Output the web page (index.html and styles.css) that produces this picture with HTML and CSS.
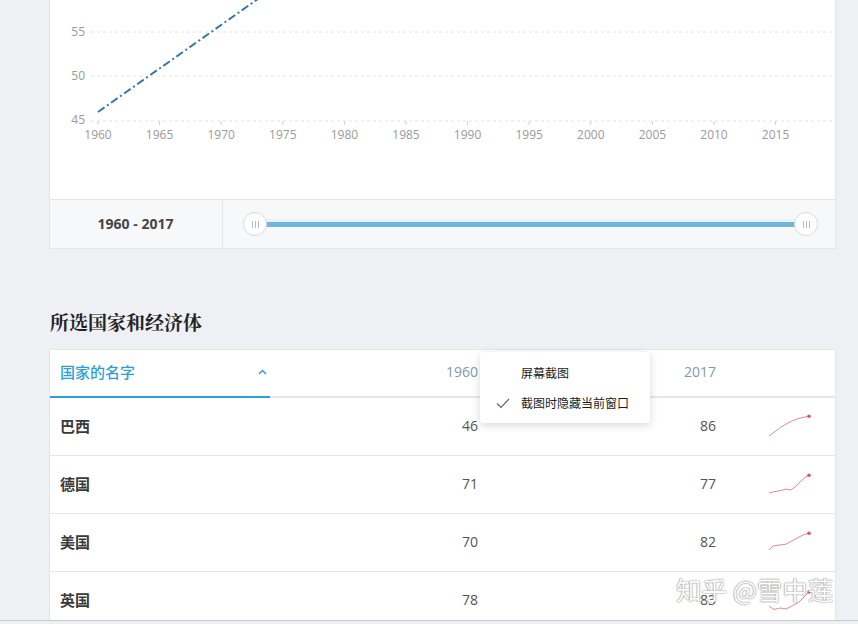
FILE: index.html
```html
<!DOCTYPE html>
<html lang="zh-CN">
<head>
<meta charset="utf-8">
<title>所选国家和经济体</title>
<link rel="stylesheet" href="styles.css">
</head>
<body>
<div class="viewport">
  <main class="page">
    <section class="chart-card">
      <svg class="chart" width="785" height="199" viewBox="0 0 785 199">
        <g class="grid">
          <line x1="41" y1="32" x2="782" y2="32"/>
          <line x1="41" y1="76" x2="782" y2="76"/>
          <line x1="41" y1="121" x2="782" y2="121"/>
        </g>
        <g class="ylabels">
          <text x="35" y="36">55</text>
          <text x="35" y="80">50</text>
          <text x="35" y="124">45</text>
        </g>
        <g class="ticks">
          <line x1="48" y1="121" x2="48" y2="125"/>
          <line x1="109.6" y1="121" x2="109.6" y2="125"/>
          <line x1="171.2" y1="121" x2="171.2" y2="125"/>
          <line x1="232.8" y1="121" x2="232.8" y2="125"/>
          <line x1="294.4" y1="121" x2="294.4" y2="125"/>
          <line x1="356" y1="121" x2="356" y2="125"/>
          <line x1="417.6" y1="121" x2="417.6" y2="125"/>
          <line x1="479.2" y1="121" x2="479.2" y2="125"/>
          <line x1="540.8" y1="121" x2="540.8" y2="125"/>
          <line x1="602.4" y1="121" x2="602.4" y2="125"/>
          <line x1="664" y1="121" x2="664" y2="125"/>
          <line x1="725.6" y1="121" x2="725.6" y2="125"/>
        </g>
        <g class="xlabels">
          <text x="48" y="139">1960</text>
          <text x="109.6" y="139">1965</text>
          <text x="171.2" y="139">1970</text>
          <text x="232.8" y="139">1975</text>
          <text x="294.4" y="139">1980</text>
          <text x="356" y="139">1985</text>
          <text x="417.6" y="139">1990</text>
          <text x="479.2" y="139">1995</text>
          <text x="540.8" y="139">2000</text>
          <text x="602.4" y="139">2005</text>
          <text x="664" y="139">2010</text>
          <text x="725.6" y="139">2015</text>
        </g>
        <line class="series" x1="48" y1="112" x2="222" y2="-11"/>
      </svg>
    </section>

    <div class="range-bar">
      <div class="range-label">1960 - 2017</div>
      <div class="range-slider">
        <span class="handle"><i></i><i></i><i></i></span>
        <span class="track"></span>
        <span class="handle"><i></i><i></i><i></i></span>
      </div>
    </div>

    <h2 class="section-title">所选国家和经济体</h2>

    <div class="table-card">
      <div class="row head">
        <div class="cell name sorted">
          <span>国家的名字</span>
          <svg class="caret" width="9" height="6" viewBox="0 0 9 6"><path d="M1 5 L4.5 1.5 L8 5"/></svg>
        </div>
        <div class="cell num">1960</div>
        <div class="cell num">2017</div>
        <div class="cell spark"></div>
      </div>
      <div class="row">
        <div class="cell name">巴西</div>
        <div class="cell num">46</div>
        <div class="cell num">86</div>
        <div class="cell spark">
          <svg width="46" height="28" viewBox="0 0 46 28"><polyline points="2,24 8,19.5 14,15 20,11.5 26,8.5 32,6.3 38,5 42,4.3"/><circle cx="42" cy="4.3" r="1.8"/></svg>
        </div>
      </div>
      <div class="row">
        <div class="cell name">德国</div>
        <div class="cell num">71</div>
        <div class="cell num">77</div>
        <div class="cell spark">
          <svg width="46" height="28" viewBox="0 0 46 28"><polyline points="2,23 8,21.5 14,20.5 19,19 24,20 28,17 33,12 38,7.5 42,5.3"/><circle cx="42" cy="5.3" r="1.8"/></svg>
        </div>
      </div>
      <div class="row">
        <div class="cell name">美国</div>
        <div class="cell num">70</div>
        <div class="cell num">82</div>
        <div class="cell spark">
          <svg width="46" height="28" viewBox="0 0 46 28"><polyline points="2,22 6,18 12,17 18,16.5 24,13.5 30,10 36,7 42,5.3"/><circle cx="42" cy="5.3" r="1.8"/></svg>
        </div>
      </div>
      <div class="row">
        <div class="cell name">英国</div>
        <div class="cell num">78</div>
        <div class="cell num">83</div>
        <div class="cell spark">
          <svg width="46" height="28" viewBox="0 0 46 28"><polyline points="2,20 7,23.5 13,22 19,23 26,19.5 32,16 37,11 42,6"/><circle cx="42" cy="6" r="1.8"/></svg>
        </div>
      </div>
    </div>
  </main>

  <div class="context-menu">
    <div class="menu-item">屏幕截图</div>
    <div class="menu-item checked">
      <svg class="check" width="14" height="11" viewBox="0 0 14 11"><path d="M1 5.5 L5 9.5 L13 1"/></svg>
      截图时隐藏当前窗口
    </div>
  </div>

  <div class="watermark">知乎 @雪中莲</div>
</div>
</body>
</html>
```

FILE: styles.css
```css
* { box-sizing: border-box; }

html, body {
  margin: 0;
  padding: 0;
  background: #eff0f4;
  font-family: "Open Sans", "Noto Sans CJK SC", sans-serif;
  color: #333;
}

.viewport {
  position: relative;
  height: 621px;
  overflow: hidden;
  border-bottom: 1px solid #c9cacf;
}

.page {
  width: 836px;
  padding-left: 49px;
}

/* chart */
.chart-card {
  height: 199px;
  background: #fff;
  border-left: 1px solid #e4e6ea;
  border-right: 1px solid #e4e6ea;
}

.chart { display: block; overflow: hidden; }

.grid line {
  stroke: #e2e2e2;
  stroke-width: 1;
  stroke-dasharray: 3 3;
}

.ticks line { stroke: #cfcfcf; stroke-width: 1; }

.ylabels text {
  font-family: "Open Sans", sans-serif;
  font-size: 12px;
  fill: #9a9a9a;
  text-anchor: end;
}

.xlabels text {
  font-family: "Open Sans", sans-serif;
  font-size: 12px;
  fill: #9a9a9a;
  text-anchor: middle;
}

.series {
  stroke: #3578ab;
  stroke-width: 2;
  stroke-dasharray: 8 3 2 3;
}

/* range bar */
.range-bar {
  display: flex;
  height: 50px;
  background: #f7f8fa;
  border: 1px solid #e3e5e9;
}

.range-label {
  width: 173px;
  border-right: 1px solid #e3e5e9;
  display: flex;
  align-items: center;
  justify-content: center;
  font-size: 14px;
  font-weight: 700;
  color: #454545;
  padding: 0 1px 1px 0;
}

.range-slider {
  flex: 1;
  display: flex;
  align-items: center;
  padding: 0 17px 0 20px;
}

.handle {
  position: relative;
  z-index: 1;
  width: 24px;
  height: 24px;
  border-radius: 50%;
  background: #fff;
  border: 1px solid #d9dadc;
  display: flex;
  align-items: center;
  justify-content: center;
  gap: 2px;
  flex: none;
}

.handle i {
  display: block;
  width: 1px;
  height: 7px;
  background: #b9b9b9;
}

.track {
  flex: 1;
  height: 5px;
  margin: 0 -12px;
  background: #74b5e0;
  box-shadow: 0 -3px 0 #e8f4fb;
}

/* title */
.section-title {
  margin: 60px 0 14px 1px;
  font-family: "Noto Serif CJK SC", "Noto Sans CJK SC", serif;
  font-size: 19px;
  line-height: 26px;
  font-weight: 700;
  color: #222;
}

/* table */
.table-card {
  background: #fff;
  border: 1px solid #e4e6ea;
  border-bottom: none;
}

.row {
  display: grid;
  grid-template-columns: 220px 220px 238px 1fr;
  height: 58px;
  border-bottom: 1px solid #e6e6e6;
}

.row.head {
  height: 48px;
  border-bottom: none;
}

.cell {
  display: flex;
  align-items: center;
  padding-bottom: 2px;
  font-size: 14px;
  color: #555;
}

.head .cell {
  border-bottom: 2px solid #e6e7ea;
  color: #7f9ba6;
  padding-bottom: 3px;
}

.head .cell.sorted {
  border-bottom-color: #2d9fd8;
  color: #2d9fd8;
  font-weight: 500;
  font-size: 15px;
  font-family: "Noto Sans CJK SC", sans-serif;
  justify-content: space-between;
  padding-right: 3px;
}

.caret path {
  fill: none;
  stroke: #2d9fd8;
  stroke-width: 1.5;
}

.cell.name {
  padding-left: 10px;
  font-family: "Noto Sans CJK SC", sans-serif;
  font-size: 15px;
  font-weight: 700;
  color: #3a3a3a;
}

.cell.num {
  justify-content: flex-end;
  padding-right: 12px;
}

.cell.spark {
  padding-left: 39px;
}

.spark polyline {
  fill: none;
  stroke: #e08a92;
  stroke-width: 1;
}

.spark circle { fill: #db5565; }

/* context menu (overlay) */
.context-menu {
  position: absolute;
  left: 480px;
  top: 352px;
  width: 170px;
  height: 71px;
  padding-top: 6px;
  background: #fff;
  border-radius: 4px;
  box-shadow: 0 2px 8px rgba(0, 0, 0, 0.16);
  font-family: "Noto Sans CJK SC", sans-serif;
  font-size: 12px;
  color: #1c1c1c;
}

.menu-item {
  position: relative;
  height: 30px;
  line-height: 30px;
  padding-left: 41px;
}

.check {
  position: absolute;
  left: 16px;
  top: 10px;
}

.check path {
  fill: none;
  stroke: #666;
  stroke-width: 1.1;
}

/* watermark (overlay) */
.watermark {
  position: absolute;
  left: 676px;
  top: 572px;
  font-family: "Noto Sans CJK SC", sans-serif;
  font-size: 25.5px;
  line-height: 34px;
  white-space: nowrap;
  color: #fff;
  text-shadow: 0 0 1px #777, 0 0 2px #999;
}
```
